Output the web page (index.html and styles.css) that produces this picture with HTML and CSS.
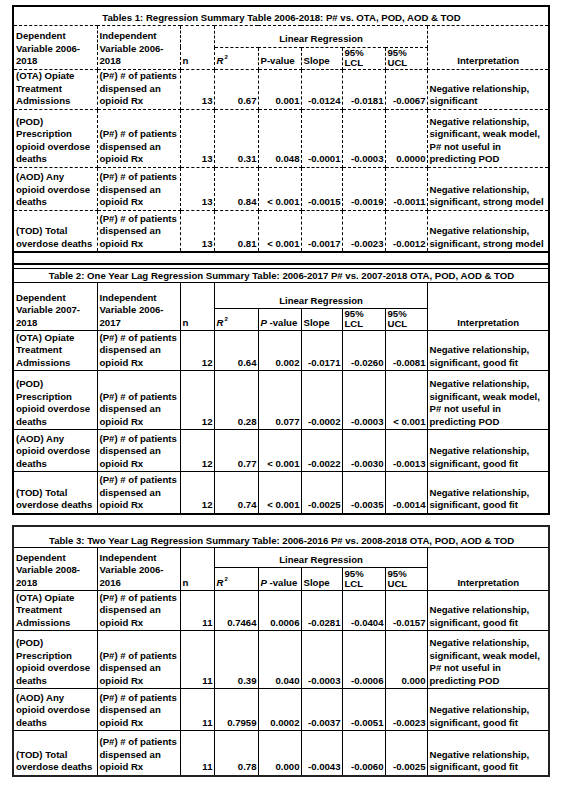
FILE: index.html
```html
<!DOCTYPE html>
<html lang="en">
<head>
  <meta charset="UTF-8">
  <meta name="viewport" content="width=device-width, initial-scale=1">
  <title>Regression Summary Tables</title>
  <link rel="stylesheet" href="styles.css">
</head>
<body>
  <div class="sheet">
    <div class="frame">
      <table class="stats t1">
        <colgroup>
          <col class="w-dep"><col class="w-ind"><col class="w-n"><col class="w-r2"><col class="w-p">
          <col class="w-slope"><col class="w-lcl"><col class="w-ucl"><col class="w-int">
        </colgroup>
        <tr class="title-row">
          <td colspan="9" class="title">Tables 1: Regression Summary Table 2006-2018: P# vs. OTA, POD, AOD &amp; TOD</td>
        </tr>
        <tr class="head-a">
          <td rowspan="2">Dependent<br>Variable 2006-<br>2018</td>
          <td rowspan="2">Independent<br>Variable 2006-<br>2018</td>
          <td rowspan="2">n</td>
          <td colspan="5" class="center">Linear Regression</td>
          <td rowspan="2" class="center">Interpretation</td>
        </tr>
        <tr class="head-b">
          <td><i>R</i><sup>2</sup></td>
          <td>P-value</td>
          <td>Slope</td>
          <td class="tight">95%<br>LCL</td>
          <td class="tight">95%<br>UCL</td>
        </tr>
        <tr class="r-ota">
          <td>(OTA) Opiate<br>Treatment<br>Admissions</td>
          <td>(P#) # of patients<br>dispensed an<br>opioid Rx</td>
          <td class="num">13</td><td class="num">0.67</td><td class="num">0.001</td>
          <td class="num">-0.0124</td><td class="num">-0.0181</td><td class="num">-0.0067</td>
          <td>Negative relationship,<br>significant</td>
        </tr>
        <tr class="r-pod">
          <td>(POD)<br>Prescription<br>opioid overdose<br>deaths</td>
          <td>(P#) # of patients<br>dispensed an<br>opioid Rx</td>
          <td class="num">13</td><td class="num">0.31</td><td class="num">0.048</td>
          <td class="num">-0.0001</td><td class="num">-0.0003</td><td class="num">0.0000</td>
          <td>Negative relationship,<br>significant, weak model,<br>P# not useful in<br>predicting POD</td>
        </tr>
        <tr class="r-aod">
          <td>(AOD) Any<br>opioid overdose<br>deaths</td>
          <td>(P#) # of patients<br>dispensed an<br>opioid Rx</td>
          <td class="num">13</td><td class="num">0.84</td><td class="num">&lt; 0.001</td>
          <td class="num">-0.0015</td><td class="num">-0.0019</td><td class="num">-0.0011</td>
          <td>Negative relationship,<br>significant, strong model</td>
        </tr>
        <tr class="r-tod">
          <td>(TOD) Total<br>overdose deaths</td>
          <td>(P#) # of patients<br>dispensed an<br>opioid Rx</td>
          <td class="num">13</td><td class="num">0.81</td><td class="num">&lt; 0.001</td>
          <td class="num">-0.0017</td><td class="num">-0.0023</td><td class="num">-0.0012</td>
          <td>Negative relationship,<br>significant, strong model</td>
        </tr>
      </table>

      <div class="gap"></div>

      <table class="stats t2">
        <colgroup>
          <col class="w-dep"><col class="w-ind"><col class="w-n"><col class="w-r2"><col class="w-p">
          <col class="w-slope"><col class="w-lcl"><col class="w-ucl"><col class="w-int">
        </colgroup>
        <tr class="title-row">
          <td colspan="9" class="title">Table 2: One Year Lag Regression Summary Table: 2006-2017 P# vs. 2007-2018 OTA, POD, AOD &amp; TOD</td>
        </tr>
        <tr class="head-a">
          <td rowspan="2">Dependent<br>Variable 2007-<br>2018</td>
          <td rowspan="2">Independent<br>Variable 2006-<br>2017</td>
          <td rowspan="2">n</td>
          <td colspan="5" class="center">Linear Regression</td>
          <td rowspan="2" class="center">Interpretation</td>
        </tr>
        <tr class="head-b">
          <td><i>R</i><sup>2</sup></td>
          <td><i>P</i> -value</td>
          <td>Slope</td>
          <td class="tight">95%<br>LCL</td>
          <td class="tight">95%<br>UCL</td>
        </tr>
        <tr class="r-ota">
          <td>(OTA) Opiate<br>Treatment<br>Admissions</td>
          <td>(P#) # of patients<br>dispensed an<br>opioid Rx</td>
          <td class="num">12</td><td class="num">0.64</td><td class="num">0.002</td>
          <td class="num">-0.0171</td><td class="num">-0.0260</td><td class="num">-0.0081</td>
          <td>Negative relationship,<br>significant, good fit</td>
        </tr>
        <tr class="r-pod">
          <td>(POD)<br>Prescription<br>opioid overdose<br>deaths</td>
          <td>(P#) # of patients<br>dispensed an<br>opioid Rx</td>
          <td class="num">12</td><td class="num">0.28</td><td class="num">0.077</td>
          <td class="num">-0.0002</td><td class="num">-0.0003</td><td class="num">&lt; 0.001</td>
          <td>Negative relationship,<br>significant, weak model,<br>P# not useful in<br>predicting POD</td>
        </tr>
        <tr class="r-aod">
          <td>(AOD) Any<br>opioid overdose<br>deaths</td>
          <td>(P#) # of patients<br>dispensed an<br>opioid Rx</td>
          <td class="num">12</td><td class="num">0.77</td><td class="num">&lt; 0.001</td>
          <td class="num">-0.0022</td><td class="num">-0.0030</td><td class="num">-0.0013</td>
          <td>Negative relationship,<br>significant, good fit</td>
        </tr>
        <tr class="r-tod">
          <td>(TOD) Total<br>overdose deaths</td>
          <td>(P#) # of patients<br>dispensed an<br>opioid Rx</td>
          <td class="num">12</td><td class="num">0.74</td><td class="num">&lt; 0.001</td>
          <td class="num">-0.0025</td><td class="num">-0.0035</td><td class="num">-0.0014</td>
          <td>Negative relationship,<br>significant, good fit</td>
        </tr>
      </table>
    </div>

    <div class="frame frame-last">
      <table class="stats t3">
        <colgroup>
          <col class="w-dep"><col class="w-ind"><col class="w-n"><col class="w-r2"><col class="w-p">
          <col class="w-slope"><col class="w-lcl"><col class="w-ucl"><col class="w-int">
        </colgroup>
        <tr class="title-row">
          <td colspan="9" class="title">Table 3: Two Year Lag Regression Summary Table: 2006-2016 P# vs. 2008-2018 OTA, POD, AOD &amp; TOD</td>
        </tr>
        <tr class="head-a">
          <td rowspan="2">Dependent<br>Variable 2008-<br>2018</td>
          <td rowspan="2">Independent<br>Variable 2006-<br>2016</td>
          <td rowspan="2">n</td>
          <td colspan="5" class="center">Linear Regression</td>
          <td rowspan="2" class="center">Interpretation</td>
        </tr>
        <tr class="head-b">
          <td><i>R</i><sup>2</sup></td>
          <td><i>P</i> -value</td>
          <td>Slope</td>
          <td class="tight">95%<br>LCL</td>
          <td class="tight">95%<br>UCL</td>
        </tr>
        <tr class="r-ota">
          <td>(OTA) Opiate<br>Treatment<br>Admissions</td>
          <td>(P#) # of patients<br>dispensed an<br>opioid Rx</td>
          <td class="num">11</td><td class="num">0.7464</td><td class="num">0.0006</td>
          <td class="num">-0.0281</td><td class="num">-0.0404</td><td class="num">-0.0157</td>
          <td>Negative relationship,<br>significant, good fit</td>
        </tr>
        <tr class="r-pod">
          <td>(POD)<br>Prescription<br>opioid overdose<br>deaths</td>
          <td>(P#) # of patients<br>dispensed an<br>opioid Rx</td>
          <td class="num">11</td><td class="num">0.39</td><td class="num">0.040</td>
          <td class="num">-0.0003</td><td class="num">-0.0006</td><td class="num">0.000</td>
          <td>Negative relationship,<br>significant, weak model,<br>P# not useful in<br>predicting POD</td>
        </tr>
        <tr class="r-aod">
          <td>(AOD) Any<br>opioid overdose<br>deaths</td>
          <td>(P#) # of patients<br>dispensed an<br>opioid Rx</td>
          <td class="num">11</td><td class="num">0.7959</td><td class="num">0.0002</td>
          <td class="num">-0.0037</td><td class="num">-0.0051</td><td class="num">-0.0023</td>
          <td>Negative relationship,<br>significant, good fit</td>
        </tr>
        <tr class="r-tod">
          <td>(TOD) Total<br>overdose deaths</td>
          <td>(P#) # of patients<br>dispensed an<br>opioid Rx</td>
          <td class="num">11</td><td class="num">0.78</td><td class="num">0.000</td>
          <td class="num">-0.0043</td><td class="num">-0.0060</td><td class="num">-0.0025</td>
          <td>Negative relationship,<br>significant, good fit</td>
        </tr>
      </table>
    </div>
  </div>
</body>
</html>
```

FILE: styles.css
```css
html, body {
  margin: 0;
  padding: 0;
  background: #fff;
}

body {
  font-family: 'Liberation Sans', Arial, sans-serif;
  font-size: 9.6px;
  font-weight: bold;
  color: #000;
}

.sheet {
  padding-top: 5px;
}

.frame {
  margin-left: 12px;
  width: 534px;
  border: 2px solid #000;
}

.frame-last {
  margin-top: 10px;
  border-color: #222;
}

/* tables */
.stats {
  width: 100%;
  border-collapse: collapse;
  table-layout: fixed;
  border-style: hidden;
}

.stats td {
  padding: 0 1px 1px 2px;
  vertical-align: bottom;
  line-height: 12.5px;
  white-space: nowrap;
  border: 1px solid #000;
  overflow: visible;
}

.stats i {
  font-style: italic;
}

.stats sup {
  font-size: 6px;
  line-height: 0;
  vertical-align: 5px;
  margin-left: 1px;
}

.stats td.title {
  text-align: center;
  border-top: none;
  padding-bottom: 0;
}

.stats td.center {
  text-align: center;
}

.stats td.num {
  text-align: right;
  padding-right: 1px;
}

.stats td.tight {
  line-height: 10px;
}

.t1 td {
  border-style: dashed;
}

.t2 {
  margin-top: 3px;
  border-style: solid hidden hidden hidden;
  border-top: 1px solid #000;
}

/* column widths */
.w-dep { width: 83px; }
.w-ind { width: 83px; }
.w-n { width: 34px; }
.w-r2 { width: 44px; }
.w-p { width: 43px; }
.w-slope { width: 41px; }
.w-lcl { width: 43px; }
.w-ucl { width: 42px; }
.w-int { width: 121px; }

/* gap between table 1 and table 2 */
.gap {
  height: 10px;
  border-top: 2px solid #000;
  border-bottom: 2px solid #000;
}

/* row heights */
.t1 .title-row { height: 18px; }
.t1 .head-a { height: 22px; }
.t1 .head-b { height: 21px; }
.t1 .r-ota { height: 40px; }
.t1 .r-pod { height: 58px; }
.t1 .r-aod { height: 43px; }
.t1 .r-tod { height: 41px; }

.t2 .title-row { height: 14px; }
.t2 .head-a { height: 26px; }
.t2 .head-b { height: 19px; }
.t2 .r-ota { height: 40px; }
.t2 .r-pod { height: 59px; }
.t2 .r-aod { height: 42px; }
.t2 .r-tod { height: 41px; }

.t3 .title-row { height: 21px; }
.t3 .head-a { height: 20px; }
.t3 .head-b { height: 23px; }
.t3 .r-ota { height: 40px; }
.t3 .r-pod { height: 58px; }
.t3 .r-aod { height: 42px; }
.t3 .r-tod { height: 44px; }
```
